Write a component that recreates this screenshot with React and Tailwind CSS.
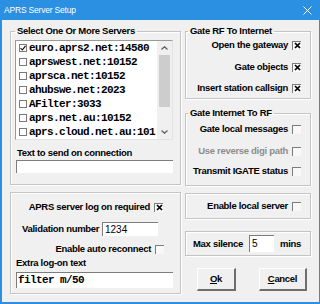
import React from 'react';

const ui = { fontFamily: '"Liberation Sans", Arial, sans-serif' };
const mono = { fontFamily: '"Liberation Mono", "DejaVu Sans Mono", monospace' };

const servers = [
  { name: 'euro.aprs2.net:14580', on: true },
  { name: 'aprswest.net:10152' },
  { name: 'aprsca.net:10152' },
  { name: 'ahubswe.net:2023' },
  { name: 'AFilter:3033' },
  { name: 'aprs.net.au:10152' },
  { name: 'aprs.cloud.net.au:101' },
];

const Check = ({ checked }) => (
  <span className="inline-flex w-[9px] h-[9px] shrink-0 items-center justify-center border-t border-l border-[#7c7c7c] bg-[#f8f8f8] ml-[4px]">
    {checked && (
      <svg width="7" height="7" viewBox="0 0 7 7">
        <path d="M1 1L6 6M6 1L1 6" stroke="#000" strokeWidth="1.7" />
      </svg>
    )}
  </span>
);

const Row = ({ label, checked, disabled, className = '' }) => (
  <div className={`flex items-center justify-end h-[12px] leading-[12px] whitespace-nowrap ${className}`}>
    <span className={disabled ? 'text-[#8d8d8d]' : 'text-black'}>{label}</span>
    <Check checked={checked} />
  </div>
);

const groupCls = 'border border-[#c4c4c4] shadow-[inset_1px_1px_0_#ffffff,1px_1px_0_#ffffff] m-0 p-0 min-w-0';
const sunken = 'bg-white border-t border-l border-[#7c7c7c]';

export default function App() {
  return (
    <div className="w-[320px] h-[304px] flex flex-col bg-[#f0f0f0] border-l-2 border-r border-b-2 border-[#2b8fe2] text-[9.5px] tracking-[-0.3px] font-bold text-black overflow-hidden whitespace-nowrap" style={ui}>
      <div className="h-[20px] shrink-0 bg-[#2b8fe2] flex items-center justify-between pl-[2px] pr-[7px] text-white font-normal text-[8.5px] tracking-[-0.2px]">
        <span>APRS Server Setup</span>
        <svg width="9" height="9" viewBox="0 0 9 9">
          <path d="M0.5 0.5L8.5 8.5M8.5 0.5L0.5 8.5" stroke="#fff" strokeWidth="1" />
        </svg>
      </div>

      <div className="flex pl-[8px]">
        {/* left column */}
        <div className="w-[171px] flex flex-col">
          <fieldset className={`${groupCls} mt-[5px] h-[160px]`}>
            <legend className="ml-[4px] px-[2px] leading-[12px]">Select One Or More Servers</legend>
            <div className="mt-[3px] ml-[4px] w-[158px] h-[100px] bg-white border border-[#9a9a9a] border-b-[#e3e3e3] border-r-[#e3e3e3] flex">
              <div className="flex-1 overflow-hidden">
                {servers.map((s) => (
                  <div key={s.name} className="h-[14px] flex items-center whitespace-nowrap">
                    <span className="w-[8px] h-[8px] shrink-0 ml-[3px] mr-[2px] border border-[#7a7a7a] bg-white flex items-center justify-center">
                      {s.on && (
                        <svg width="6" height="6" viewBox="0 0 6 6">
                          <path d="M0.5 3L2.3 5L5.5 0.8" fill="none" stroke="#000" strokeWidth="1.1" />
                        </svg>
                      )}
                    </span>
                    <span className="text-[11px] tracking-[-0.6px] leading-[14px]" style={mono}>{s.name}</span>
                  </div>
                ))}
              </div>
              <div className="w-[15px] bg-[#f0f0f0] flex flex-col">
                <div className="h-[14px] flex items-center justify-center">
                  <svg width="7" height="4" viewBox="0 0 7 4"><path d="M0.5 3.5L3.5 0.7L6.5 3.5" fill="none" stroke="#606060" strokeWidth="1.2" /></svg>
                </div>
                <div className="flex-1">
                  <div className="mx-[2px] h-[52px] bg-[#cdcdcd]" />
                </div>
                <div className="h-[14px] flex items-center justify-center">
                  <svg width="7" height="4" viewBox="0 0 7 4"><path d="M0.5 0.5L3.5 3.3L6.5 0.5" fill="none" stroke="#606060" strokeWidth="1.2" /></svg>
                </div>
              </div>
            </div>
            <div className="mt-[7px] ml-[6px] leading-[12px]">Text to send on connection</div>
            <div className={`mt-[1px] ml-[5px] w-[157px] h-[13px] ${sunken}`} />
          </fieldset>

          <div className={`${groupCls} mt-[7px] h-[102px] flex flex-col`}>
            <Row label="APRS server log on required" checked className="mt-[8px] pr-[17px]" />
            <div className="mt-[8px] flex items-center h-[15px]">
              <span className="ml-[11px] w-[80px] leading-[12px]">Validation number</span>
              <div className={`w-[56px] h-[14px] ${sunken} font-normal text-[10px] tracking-normal leading-[13px] pl-[2px]`}>1234</div>
            </div>
            <Row label="Enable auto reconnect" className="mt-[7px] pr-[16px]" />
            <div className="mt-[2px] ml-[5px] leading-[12px]">Extra log-on text</div>
            <div className={`mt-[3px] ml-[5px] w-[157px] h-[16px] ${sunken} pl-[1px] text-[11px] tracking-[-0.6px] leading-[15px]`} style={mono}>filter m/50</div>
          </div>
        </div>

        {/* right column */}
        <div className="w-[126px] ml-[4px] flex flex-col">
          <fieldset className={`${groupCls} mt-[5px] h-[74px]`}>
            <legend className="ml-[2px] px-[2px] leading-[12px]">Gate RF To Internet</legend>
            <Row label="Open the gateway" checked className="mt-[2px] pr-[9px]" />
            <Row label="Gate objects" checked className="mt-[10px] pr-[9px]" />
            <Row label="Insert station callsign" checked className="mt-[9px] pr-[9px]" />
          </fieldset>

          <fieldset className={`${groupCls} mt-[8px] h-[79px]`}>
            <legend className="ml-[2px] px-[2px] leading-[12px]">Gate Internet To RF</legend>
            <Row label="Gate local messages" className="mt-[4px] pr-[9px]" />
            <Row label="Use reverse digi path" disabled className="mt-[10px] pr-[9px]" />
            <Row label="Transmit IGATE status" className="mt-[8px] pr-[9px]" />
          </fieldset>

          <div className={`${groupCls} mt-[7px] h-[26px] flex items-center justify-end pr-[9px]`}>
            <Row label="Enable local server" />
          </div>

          <div className={`${groupCls} mt-[12px] h-[25px] flex items-center`}>
            <span className="ml-[7px] w-[56px] leading-[12px]">Max silence</span>
            <div className={`w-[25px] h-[17px] ${sunken} font-normal text-[10px] tracking-normal leading-[16px] pl-[2px]`}>5</div>
            <span className="ml-[6px] leading-[12px]">mins</span>
          </div>

          <div className="mt-[12px] flex">
            <button className="ml-[12px] w-[39px] h-[23px] border-t border-l border-t-white border-l-white border-r-2 border-b-2 border-r-[#6e6e6e] border-b-[#6e6e6e] font-bold">
              <span className="underline">O</span>k
            </button>
            <button className="ml-[23px] w-[48px] h-[23px] border-t border-l border-t-white border-l-white border-r-2 border-b-2 border-r-[#6e6e6e] border-b-[#6e6e6e] font-bold">
              <span className="underline">C</span>ancel
            </button>
          </div>
        </div>
      </div>
    </div>
  );
}
